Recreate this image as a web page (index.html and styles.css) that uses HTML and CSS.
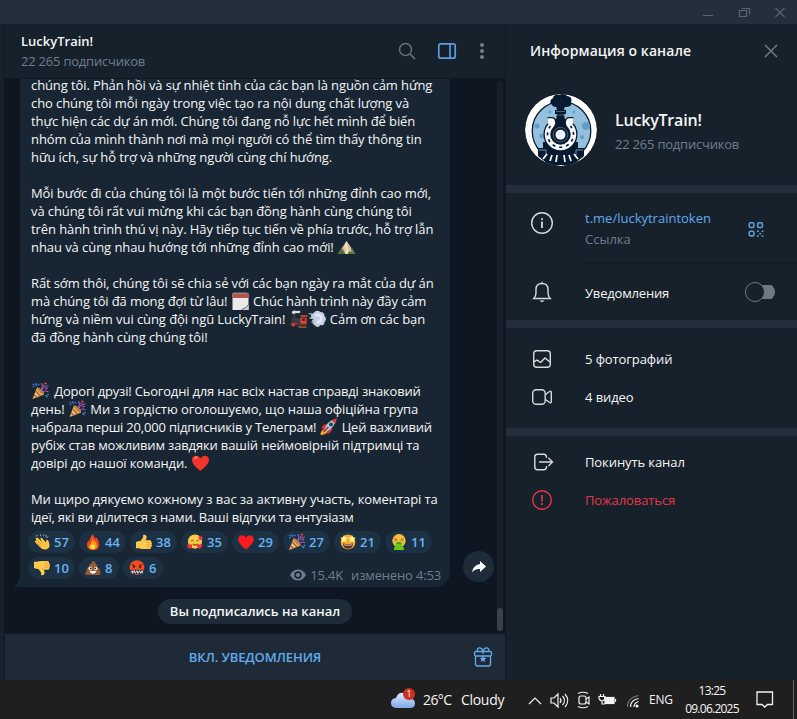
FILE: index.html
```html
<!DOCTYPE html>
<html lang="ru">
<head>
<meta charset="utf-8">
<title>LuckyTrain!</title>
<link rel="stylesheet" href="styles.css">
</head>
<body>
<svg class="sprite" aria-hidden="true">
  <symbol id="party" viewBox="0 0 18 18">
    <path d="M1 17 5.5 5.5 Q10 7 12.5 12.5Z" fill="#fbc02d"/>
    <path d="M4.2 9 9 14M2.6 13 5.6 15.6" stroke="#8e4fb5" stroke-width="1.3"/>
    <ellipse cx="9" cy="9" rx="1.6" ry="4.8" transform="rotate(-45 9 9)" fill="#c8842b"/>
    <path d="M9 8Q12 5 10 1M10 9Q12 4 17 4M11 10Q14 8 17 10" stroke="#8560c4" fill="none" stroke-width="1.2"/>
    <path d="M1 2l2 1M4 1l1 3M6 2l2 1M1 5l2-1" stroke="#3d6fd6" stroke-width="1.3"/>
    <path d="M13 1l2 1M14 7l2-1M12 3l1 1" stroke="#e0465e" stroke-width="1.5"/>
    <path d="M14 13l2 2M16 12l1 1" stroke="#4a86e0" stroke-width="1.3"/>
  </symbol>
  <symbol id="calendar" viewBox="0 0 18 18">
    <path d="M1 1.500h16V18H1z" fill="#e9e9ea"/><path d="M1 1.500h16V6H1z" fill="#b9524e"/>
    <path d="M2 1h14" stroke="#a8a8ad" stroke-width="1.6" stroke-dasharray="1 1"/>
    <path d="M10 18q5-1 7-6v6z" fill="#d0d1d4"/><path d="M10 17.500q5-1 7-5" stroke="#606469" fill="none"/>
  </symbol>
  <symbol id="mountain" viewBox="0 0 18 18">
    <path d="M0 16 9 3 18 16z" fill="#8d8271"/><path d="M9 3 13 9 14 15 8 16 5 10z" fill="#d8c7a0"/>
    <path d="M9 3 7 9l2 3-2 4h5l-2-6z" fill="#efe0bd"/><path d="M4 11 0 16h8l-2-3zM12 13l6 3h-8z" fill="#54753b"/>
    <path d="M3 13l3 3M14 9l3 6" stroke="#4b504a"/>
  </symbol>
  <symbol id="train" viewBox="0 0 18 18">
    <path d="M4 4Q1 3 3 1q2-1 4 0 4-1 4 1-1 2-4 1z" fill="#d8dadb"/>
    <path d="M3 4h3v4h5V5h6v9H2V8h2z" fill="#393b41"/><path d="M11 5h7v2h-7z" fill="#c83a2c"/><path d="M11 8h6v6h-6z" fill="#e64936"/>
    <path d="M12.500 8.500h3v2.500h-3z" fill="#48231f"/><path d="M1 13h16v2H1z" fill="#a62f2a"/><circle cx="4" cy="15" r="1.700" fill="#d33e32"/><circle cx="9" cy="15" r="2" fill="#33363c"/><path d="M9 17h8" stroke="#e37a2d"/>
  </symbol>
  <symbol id="puff" viewBox="0 0 18 18">
    <path d="M5 3Q8-1 12 2q4 0 4 4 3 3 0 6 0 4-4 3-3 4-6 0-3-1-1-3Q2 11 5 9 1 9 3 7 1 4 5 3z" fill="#c3cfe3"/>
    <path d="M7 5q5-1 6 3-1 5-5 4" fill="none" stroke="#e3eaf5" stroke-width="2.500"/><path d="M0 4q3-1 4 1M1 8h4M3 12h3" stroke="#a8b7cf" stroke-width="1.300" fill="none"/>
  </symbol>
  <symbol id="rocket" viewBox="0 0 18 18">
    <path d="M1 17q0-5 4-6l3 3q-2 3-7 3z" fill="#f7a624"/><path d="M2 10q1-4 6-4l-3 6zM8 16q4-1 5-6l-6 3z" fill="#d23633"/>
    <path d="M5 12Q7 3 16 1q0 8-9 13z" fill="#a9cadb"/><path d="M12 2.500 17.500 0 16 6z" fill="#d73e38"/><circle cx="11.500" cy="6.500" r="2" fill="#2c4258"/><path d="M4 14l5-5" stroke="#a3282a" stroke-width="1.500"/>
  </symbol>
  <symbol id="heart" viewBox="0 0 18 18">
    <path d="M9 17Q0 10 .5 6C.5 1 6.500.200 9 4.500 11.500.200 17.500 1 17.500 6 18 10 9 17 9 17z" fill="#f3352b"/><path d="M3 5q1-2 3-2" stroke="#ff8170" stroke-width="1.300" fill="none"/>
  </symbol>
  <symbol id="heart-flat" viewBox="0 0 18 18">
    <path d="M9 17.500Q0 10.500.3 6C.5.500 7-.3 9 4.500 11-.3 17.500.500 17.700 6 18 10.500 9 17.500 9 17.500z" fill="#fa1c22"/>
  </symbol>
  <symbol id="clap" viewBox="0 0 18 18">
    <path d="M2 5q1.500-2 3 0l4 4-2-4q1-1.500 2.500 0l4 4.500.5-3q2-.5 2.500 2l1 4q0 4-4 5-4 .5-7-3L1 9q-.5-1.500 1.500-1.500z" fill="#ffc642"/>
    <path d="M3.500 7l5 5M3 10l5 4.500" stroke="#d88a24" stroke-width=".8"/><path d="M2 2.500l2-1M7 .5l1 2M11 .5v2M14 1l-1 2M16 3l-2 1" stroke="#a8b5c2" stroke-width="1.100"/>
  </symbol>
  <symbol id="fire" viewBox="0 0 18 18">
    <path d="M9 0q0 3 3 5l1-1q3 4 3 8 0 6-7 6-6 0-7-5 0-3 2-6l1 2q0-5 4-9z" fill="#f3451b"/><path d="M9 5q0 3 3 4l1 2q2 6-4 6.500-6 0-4-6l1 1q1-3 3-7.500z" fill="#ff9e18"/><path d="M9 10q0 2 2 3 1 4-2 4t-2.500-4q2-1 2.500-3z" fill="#ffe34f"/>
  </symbol>
  <symbol id="thumb" viewBox="0 0 18 18">
    <path d="M0 9q2-1 5-1l3-4V1q3-1 4 2 0 2-1 4h4.500q2 0 1.500 2 1.500 1 .5 3 1 1-.5 2.500 0 2.500-2 2.500H8q-3 0-4-1H0z" fill="#ffc94c"/><path d="M11 7l-2 1M12 9.500h4M12 12h4.500M12 14.500h4" stroke="#e09b32" stroke-width=".8"/>
  </symbol>
  <symbol id="love" viewBox="0 0 18 18">
    <circle cx="9" cy="8.500" r="8" fill="#ffc847"/><path d="M4.500 8q1.500-2 3 0M10.500 8q1.500-2 3 0" stroke="#633a20" fill="none"/><path d="M6.500 11q2.500 3 5 0" stroke="#783b22" fill="none" stroke-width="1.200"/>
    <path d="M3 17q-4-3-2.500-5Q2 10.500 3.500 12q2-1 2.500 1 0 2-3 4zM14 17q-4-3-3-5 2-1.500 3 0 2-1.500 3 0 1 2-3 5zM15 7q-3-2-2-4 1-1 2 0 1.500-1 2.500.5T15 7z" fill="#f42e3d"/>
  </symbol>
  <symbol id="starface" viewBox="0 0 18 18">
    <circle cx="9" cy="9" r="8.300" fill="#f0aa38"/><path d="M3.500 10.500q5.500 2 11 0 0 6-5.500 6t-5.500-6z" fill="#5f2c1b"/><path d="M4.500 11.500q4.500 1.300 9 0l-.8 1.500H5.300z" fill="#fff"/>
    <path id="star" d="m4.500 1.200 1.300 2.700 3 .4-2.200 2 .6 3-2.700-1.500-2.700 1.500.6-3-2.200-2 3-.4z" fill="#fff58a"/><path d="m13.500 1.200 1.300 2.700 3 .4-2.200 2 .6 3-2.700-1.500-2.700 1.500.6-3-2.200-2 3-.4z" fill="#fff58a"/>
  </symbol>
  <symbol id="sick" viewBox="0 0 18 18">
    <circle cx="9" cy="7.500" r="7.500" fill="#f8bd3e"/><path d="M3.500 5 7 6.500 4 8M14.500 5 11 6.500 14 8" fill="none" stroke="#8a5a25" stroke-width=".9"/>
    <path d="M5.500 10q3.500-3 7 0v4q3 1 2 4h-11q-1-2 1-4z" fill="#69c51c"/><path d="M6.500 10q2.500-1.500 5 0v1h-5z" fill="#3d8a19"/>
  </symbol>
  <symbol id="poop" viewBox="0 0 18 18">
    <path d="M8 1q4 0 4 3.500 2.500 1 2 4 3 .5 2.500 4 1.500 1 1 3-1 2-3 1.500h-11Q0 17 .3 15q0-2 1.700-3 0-3 2-4 0-3 3-4 1-1 1-3z" fill="#965b35"/><circle cx="6" cy="9.500" r="2" fill="#fff"/><circle cx="12" cy="9.500" r="2" fill="#fff"/><circle cx="6.500" cy="9.500" r="1" fill="#251d19"/><circle cx="11.500" cy="9.500" r="1" fill="#251d19"/><path d="M5 12.500h8q-1 3-4 3t-4-3z" fill="#fff"/>
  </symbol>
  <symbol id="angry" viewBox="0 0 18 18">
    <circle cx="9" cy="8.500" r="8.300" fill="#ef4e25"/><path d="M3 5l4 2M15 5l-4 2" stroke="#6b1e19" stroke-width="1.200"/><circle cx="5.500" cy="8" r="1.200" fill="#4c1a18"/><circle cx="12.500" cy="8" r="1.200" fill="#4c1a18"/>
    <path d="M1 11h16v5H1z" fill="#32343a"/><path d="M2 14l2-2v3l2-3 1 3 2-3 1 3 2-3 1 3 2-3v3" fill="none" stroke="#eee"/>
  </symbol>
</svg>

<div class="window">
  <header class="titlebar">
    <svg viewBox="0 0 97 24" fill="none" stroke="#566475" stroke-width="1.200"><path d="M3 15.500h10M39.500 10.500h7v6h-7zM41.500 8.500h8v6M75.500 8l9 9M84.500 8l-9 9"/></svg>
  </header>
  <div class="client">
    <main class="chat">
      <header class="chat-head">
        <div class="chat-name"><b>LuckyTrain!</b><span>22 265 подписчиков</span></div>
        <svg class="head-icons" viewBox="0 0 110 54" fill="none">
          <circle cx="10.500" cy="25.500" r="6" stroke="#66717c" stroke-width="1.500"/><path d="M15 30l5 5" stroke="#66717c" stroke-width="1.700"/>
          <rect x="43.800" y="19.800" width="16.400" height="14.400" rx="2" stroke="#5a9ddd" stroke-width="1.700"/><path d="M55 20v14" stroke="#5a9ddd" stroke-width="1.700"/>
          <g fill="#737d87"><circle cx="87" cy="21" r="2.100"/><circle cx="87" cy="27" r="2.100"/><circle cx="87" cy="33" r="2.100"/></g>
        </svg>
      </header>
      <section class="feed">
        <div class="message-row">
          <article class="bubble">
            <div class="text">
              <p>chúng tôi. Phản hồi và sự nhiệt tình của các bạn là nguồn cảm hứng</p>
              <p>cho chúng tôi mỗi ngày trong việc tạo ra nội dung chất lượng và</p>
              <p>thực hiện các dự án mới. Chúng tôi đang nỗ lực hết mình để biến</p>
              <p>nhóm của mình thành nơi mà mọi người có thể tìm thấy thông tin</p>
              <p>hữu ích, sự hỗ trợ và những người cùng chí hướng.</p>
              <p></p>
              <p>Mỗi bước đi của chúng tôi là một bước tiến tới những đỉnh cao mới,</p>
              <p>và chúng tôi rất vui mừng khi các bạn đồng hành cùng chúng tôi</p>
              <p>trên hành trình thú vị này. Hãy tiếp tục tiến về phía trước, hỗ trợ lẫn</p>
              <p>nhau và cùng nhau hướng tới những đỉnh cao mới! <svg><use href="#mountain"/></svg></p>
              <p></p>
              <p>Rất sớm thôi, chúng tôi sẽ chia sẻ với các bạn ngày ra mắt của dự án</p>
              <p>mà chúng tôi đã mong đợi từ lâu! <svg><use href="#calendar"/></svg> Chúc hành trình này đầy cảm</p>
              <p>hứng và niềm vui cùng đội ngũ LuckyTrain! <svg><use href="#train"/></svg><svg><use href="#puff"/></svg> Cảm ơn các bạn</p>
              <p>đã đồng hành cùng chúng tôi!</p>
              <p></p>
              <p></p>
              <p><svg><use href="#party"/></svg> Дорогі друзі! Сьогодні для нас всіх настав справді знаковий</p>
              <p>день! <svg><use href="#party"/></svg> Ми з гордістю оголошуємо, що наша офіційна група</p>
              <p>набрала перші 20,000 підписників у Телеграм! <svg><use href="#rocket"/></svg> Цей важливий</p>
              <p>рубіж став можливим завдяки вашій неймовірній підтримці та</p>
              <p>довірі до нашої команди. <svg><use href="#heart"/></svg></p>
              <p></p>
              <p>Ми щиро дякуємо кожному з вас за активну участь, коментарі та</p>
              <p>ідеї, які ви ділитеся з нами. Ваші відгуки та ентузіазм</p>
            </div>
            <div class="reactions">
              <span><svg><use href="#clap"/></svg>57</span><span><svg><use href="#fire"/></svg>44</span><span><svg><use href="#thumb"/></svg>38</span><span><svg><use href="#love"/></svg>35</span><span><svg><use href="#heart-flat"/></svg>29</span><span><svg class="wide"><use href="#party"/></svg>27</span><span><svg><use href="#starface"/></svg>21</span><span><svg><use href="#sick"/></svg>11</span>
            </div>
            <div class="last-row">
              <div class="reactions">
                <span><svg class="down"><use href="#thumb"/></svg>10</span><span class="one"><svg><use href="#poop"/></svg>8</span><span class="one"><svg><use href="#angry"/></svg>6</span>
              </div>
              <div class="meta">
                <svg viewBox="0 0 16 12"><path d="M0 6Q3 .5 8 .5T16 6q-3 5.500-8 5.500T0 6z" fill="#6d7f8f"/><circle cx="8" cy="6" r="3.700" fill="#182533"/><circle cx="8" cy="6" r="2" fill="#6d7f8f"/></svg>
                <span>15.4K</span><span>изменено 4:53</span>
              </div>
            </div>
            <svg class="tail" viewBox="0 0 6 12"><path d="M6 0v12H.5Q-.5 12 .5 11 5 8 6 0z" fill="#182533"/></svg>
          </article>
          <button class="share" aria-label="Поделиться"><svg viewBox="0 0 16 14"><path d="M9 1l6 5.500L9 12V9Q4 8.500 1 12.500 2 5 9 4z" fill="#fff"/></svg></button>
        </div>
        <div class="service">Вы подписались на канал</div>
        <div class="scroll"><i></i></div>
      </section>
      <footer class="mute"><span>ВКЛ. УВЕДОМЛЕНИЯ</span>
        <svg viewBox="0 0 20 20" fill="none" stroke="#63abec" stroke-width="1.300"><rect x="1.500" y="4.500" width="17" height="4.500" rx="1.500"/><path d="M2.500 9v8q0 2 2 2h11q2 0 2-2V9M10 4.500Q9 .5 6 .8 3 2 5 4.500M10 4.500Q11 .5 14 .8 17 2 15 4.500M10 4v3"/><path d="m10 8.500 1 2.200 2.400.3-1.800 1.600.5 2.400-2.100-1.200L7.900 15l.5-2.400L6.600 11l2.400-.3z" fill="#63abec" stroke="none"/></svg>
      </footer>
    </main>
    <aside class="info">
      <header class="info-head"><h2>Информация о канале</h2><svg viewBox="0 0 14 14" stroke="#77818a" stroke-width="1.400"><path d="M1 1l12 12M13 1 1 13"/></svg></header>
      <div class="profile">
        <svg class="avatar" viewBox="0 0 72 72">
          <clipPath id="round"><circle cx="36" cy="36" r="36"/></clipPath>
          <g clip-path="url(#round)"><circle cx="36" cy="36" r="36" fill="#fff"/>
            <circle cx="36.500" cy="37" r="29.300" fill="#92c0dd" stroke="#071a31" stroke-width="1.300"/>
            <g fill="#659dc4"><circle cx="61" cy="32" r="4"/><circle cx="12" cy="32" r="2.500"/><circle cx="17" cy="42" r="2.500"/><circle cx="49" cy="18" r="1.500"/><circle cx="25" cy="18" r="1.500"/><circle cx="57" cy="43" r="2"/></g>
            <g fill="#071a31">
              <path d="M27 11q-4-4 1-7 1-4 6-3 5-3 8 1 6 1 4 6 2 4-4 5H31q-3 0-4-2z"/>
              <path d="M31 12h9l-1 4h2v4h-2l1 6h-9l1-6h-2v-4h2z"/>
              <path d="M26 25h19l4 10v20H22V35z"/>
              <path d="M13 54h5v-6h35v6h6v8L48 71H24L13 62z"/>
            </g>
            <path d="M31 17.500h9M31 21h9" stroke="#58748d" stroke-width=".8"/>
            <path d="M22.500 27H27Q28 29 26.500 31a13 13 0 1 0 18 0Q43 29 44 27h4.500" fill="none" stroke="#071a31" stroke-width="8" stroke-linejoin="round"/>
            <path d="M22.500 27H27Q28 29 26.500 31a13 13 0 1 0 18 0Q43 29 44 27h4.500" fill="none" stroke="#f6f9fb" stroke-width="5.500" stroke-linejoin="round"/>
            <path d="M25.500 32a13 13 0 1 0 20 0" fill="none" stroke="#071a31" stroke-width="1.600" stroke-dasharray="3 4"/>
            <circle cx="35.500" cy="40.700" r="7.300" fill="none" stroke="#6b8298" stroke-width=".7"/><circle cx="35.500" cy="40.700" r="5" fill="#eff5f9"/>
            <path d="M14 56h7v5M58 56h-7v5" fill="none" stroke="#91adc2" stroke-width=".8"/>
            <path d="M22 60l-4 5M27 61l-2 6M32 61l-1 7M39 61l1 7M44 61l2 6M49 60l4 5" stroke="#fff" stroke-width="1.700"/>
          </g>
        </svg>
        <div><h1>LuckyTrain!</h1><p>22 265 подписчиков</p></div>
      </div>
      <section class="details">
        <div class="row link">
          <svg class="icon" viewBox="0 0 24 24"><circle cx="12" cy="12" r="10.300"/><path d="M12 10.500V17M12 7.200v1.800" stroke-width="1.800"/></svg>
          <div class="label"><a>t.me/luckytraintoken</a><small>Ссылка</small></div>
          <svg class="qr" viewBox="0 0 16 16" fill="none" stroke="#5e9fda" stroke-width="1.700"><rect x=".8" y=".8" width="5" height="5" rx="1.500"/><rect x="9.800" y=".8" width="5" height="5" rx="1.500"/><rect x=".8" y="9.800" width="5" height="5" rx="1.500"/><path d="M9 9.800h2M14 9.800h2M11.500 12.500h2M9 15h2M14 15h2"/></svg>
        </div>
        <div class="row notify">
          <svg class="icon" viewBox="0 0 24 24"><path d="M3.800 18.500h16.400q-2.200-2.500-2.200-5.500V9.500q0-6-6-6t-6 6V13q0 3-2.200 5.500zM12 1.800v1.700"/><path d="M9.500 20.500h5q-2.500 3-5 0z" fill="#d8dbde" stroke="none"/></svg>
          <div class="label">Уведомления</div><i class="toggle"></i>
        </div>
      </section>
      <section class="media">
        <div class="row"><svg class="icon" viewBox="0 0 24 24"><rect x="3.700" y="3.700" width="16.600" height="16.600" rx="3"/><path d="M4 15q3-3 4.500-1 1.500 2.500 3.500 0l3-3 5 4"/></svg><div class="label">5 фотографий</div></div>
        <div class="row"><svg class="icon" viewBox="0 0 24 24"><rect x="2.700" y="4.700" width="12.500" height="14.600" rx="3.500"/><path d="M15.500 9.500 19.500 6.500q1.800-1 1.800 1v9q0 2-1.800 1l-4-3"/></svg><div class="label">4 видео</div></div>
      </section>
      <section class="actions">
        <div class="row"><svg class="icon" viewBox="0 0 24 24"><path d="M16.500 8V7q0-2.700-2.700-2.700H7.500q-2.700 0-2.700 2.700v10q0 2.700 2.700 2.700h6.300q2.700 0 2.700-2.700v-1M9 12h13.500M18.500 8l4 4-4 4"/></svg><div class="label">Покинуть канал</div></div>
        <div class="row danger"><svg class="icon" viewBox="0 0 24 24"><circle cx="12" cy="12" r="9.300"/><path d="M12 7v6.500M12 15v2" stroke-width="1.700"/></svg><div class="label">Пожаловаться</div></div>
      </section>
    </aside>
  </div>
  <footer class="taskbar">
    <svg class="weather" viewBox="0 0 28 24"><defs><linearGradient id="sky" x2="0" y2="1"><stop stop-color="#dfeaff"/><stop offset="1" stop-color="#7fa8e8"/></linearGradient></defs><path d="M6 22q-5-.5-5-5t5-5q2-6 8-5 5 0 7 6 4 0 4 4.500T20 22z" fill="url(#sky)"/><circle cx="19" cy="8" r="6" fill="#cc3023"/><text x="16.500" y="11.300" fill="#fff" font-family="Open Sans" font-size="9">1</text></svg>
    <span class="temp">26°C</span><span class="cloudy">Cloudy</span>
    <svg class="tray" viewBox="0 0 116 39" fill="none" stroke="#f2f2f2" stroke-width="1.200">
      <path d="M1 24l6-6 6 6"/>
      <path d="M23 18h3l4-4v13l-4-4h-3zM32 18q2 2.500 0 5M34.500 16q4 4.500 0 9M37 14q5.500 6.500 0 13"/>
      <rect x="51" y="16" width="7" height="8" rx="2"/><path d="M58 19l3-2v7l-3-2M50 13.500q5-2.500 10 0M50 26.500q5 2.500 10 0"/>
      <rect x="77" y="17.500" width="9" height="6" fill="#f2f2f2"/><path d="M87.500 19v3M72.500 14v3M75.500 14v3M71 16.500h6v2q-1 2.500-3 2.500t-3-2.500zM74 21v3h3"/>
      <path d="M99.500 27q0-9.500 11-11.500" stroke="#777"/><path d="M102.500 27q0-7 8-8.500"/><path d="M106 27q0-4 4.500-5.500"/><circle cx="109" cy="26" r="1.500" fill="#fff" stroke="none"/>
    </svg>
    <span class="lang">ENG</span>
    <div class="clock"><span>13:25</span><span>09.06.2025</span></div>
    <svg class="action" viewBox="0 0 18 17" fill="none" stroke="#f2f2f2" stroke-width="1.300"><path d="M1 1h15.500v12.500h-5L8.700 16 6 13.500H1z"/></svg>
    <i class="desktop-edge"></i>
  </footer>
</div>
</body>
</html>
```
FILE: styles.css
```css
* { box-sizing: border-box; }
body { margin: 0; background: #17212b; color: #f5f5f5; font: 13px/18px "Open Sans", "Noto Sans", sans-serif; overflow: hidden; }
p, h1, h2 { margin: 0; }
svg { display: block; flex: none; }
.sprite { position: absolute; width: 0; height: 0; }
.window { width: 797px; height: 719px; display: flex; flex-direction: column; }
.titlebar { height: 24px; flex: none; background: #242f3d; display: flex; justify-content: flex-end; }
.titlebar svg { width: 97px; height: 24px; }
.client { height: 656px; display: flex; padding-left: 4px; }
.chat { width: 502px; border: solid #101922; border-width: 0 1px; display: flex; flex-direction: column; }
.chat-head { height: 55px; flex: none; display: flex; justify-content: space-between; border-bottom: 1px solid #101922; padding-left: 16px; }
.chat-name { display: flex; flex-direction: column; padding-top: 7px; line-height: 20px; }
.chat-name b { font-weight: 600; }
.chat-name span { color: #6d7f8f; letter-spacing: -.22px; }
.head-icons { width: 110px; height: 54px; }
.feed { flex: 1; min-height: 0; overflow: hidden; background: #0e1621; position: relative; }
.message-row { display: flex; align-items: flex-end; gap: 13px; padding-left: 15px; margin-top: -3px; }
.bubble { width: 430px; height: 511px; background: #182533; border-radius: 0 0 15px 0; position: relative; padding: 0 8px; flex: none; }
.text { padding-left: 3px; white-space: nowrap; letter-spacing: -.09px; }
.text p { height: 18px; }
.text p:nth-child(1) { letter-spacing: -.1px; }
.text p:nth-child(3) { letter-spacing: -.115px; }
.text p:nth-child(10) { letter-spacing: -.065px; }
.text p:nth-child(12), .text p:nth-child(13) { letter-spacing: -.12px; }
.text p:nth-child(14) { letter-spacing: -.075px; }
.text p:nth-child(15) { letter-spacing: -.11px; }
.text p:nth-child(18) { letter-spacing: -.185px; }
.text p:nth-child(19) { letter-spacing: -.075px; }
.text p:nth-child(20) { letter-spacing: -.185px; }
.text p:nth-child(21) { letter-spacing: -.15px; }
.text p:nth-child(22) { letter-spacing: -.13px; }
.text p:nth-child(24) { letter-spacing: -.07px; }
.text p:nth-child(25) { letter-spacing: -.21px; }
.text svg { display: inline-block; width: 19px; height: 18px; vertical-align: -4px; }
.text p:nth-child(18) svg { margin-right: 1px; }
.reactions { display: flex; gap: 4px; margin-top: 5px; }
.reactions span { width: 47px; height: 22px; border-radius: 11px; background: #1c3144; color: #6ab2f2; font-weight: 600; line-height: 22px; display: flex; align-items: center; gap: 4px; padding-left: 6px; }
.reactions .one { width: 40px; }
.reactions svg { width: 16px; height: 16px; }
.reactions .wide { width: 18px; height: 18px; margin: 0 -1px; }
.reactions .down { transform: scaleY(-1); }
.last-row { display: flex; justify-content: space-between; }
.last-row .reactions { margin-top: 4px; }
.meta { display: flex; align-items: center; color: #6d7f8f; margin-top: 13px; height: 18px; padding-right: 1px; letter-spacing: -.16px; }
.meta svg { width: 16px; height: 12px; margin-right: 4px; }
.meta span + span { margin-left: 8px; }
.tail { position: absolute; left: -6px; bottom: 0; width: 6px; height: 12px; }
.share { border: 0; padding: 0; width: 31px; height: 31px; border-radius: 50%; background: #1e2c3a; display: grid; place-items: center; margin-bottom: 5px; }
.share svg { width: 16px; height: 14px; }
.service { width: 194px; height: 25px; margin: 12px 0 0 153px; border-radius: 13px; background: #1e2c3a; font-weight: 600; line-height: 25px; text-align: center; }
.scroll { position: absolute; right: 2px; top: 2px; bottom: 2px; width: 6px; border-radius: 3px; background: #191f2a; display: flex; align-items: flex-end; }
.scroll i { width: 6px; height: 23px; border-radius: 3px; background: #3b414c; }
.mute { height: 47px; flex: none; border-top: 1px solid #101922; background: #1e2a38; color: #61aaec; display: flex; align-items: center; padding-right: 12px; font-weight: 600; letter-spacing: -.12px; }
.mute span { flex: 1; text-align: center; padding-left: 32px; }
.mute svg { width: 20px; height: 20px; }
.info { flex: 1; }
.info-head { height: 54px; display: flex; align-items: center; justify-content: space-between; padding: 0 19px 0 24px; }
.info-head h2 { font: 600 14px/20px "Open Sans", sans-serif; letter-spacing: .08px; }
.info-head svg { width: 14px; height: 14px; }
.profile { height: 107px; padding: 16px 0 0 19px; display: flex; gap: 18px; }
.avatar { width: 72px; height: 72px; }
.profile h1 { font: 600 16px/22px "Open Sans", sans-serif; margin-top: 15px; letter-spacing: -.2px; }
.profile p { color: #6d7f8f; line-height: 20px; margin-top: 3px; letter-spacing: -.22px; }
.info section { border-top: 8px solid #232e3c; }
.row { display: flex; align-items: center; height: 38px; padding-left: 24px; }
.icon { width: 24px; height: 24px; fill: none; stroke: #d8dbde; stroke-width: 1.4; margin-right: 31px; }
.label { flex: 1; letter-spacing: -.09px; }
.details { height: 135px; }
.row.link { height: 71px; align-items: flex-start; padding-top: 18px; }
.link .label { display: flex; flex-direction: column; height: 53px; border-bottom: 1px solid #101922; margin-left: -2px; padding-left: 2px; letter-spacing: 0; }
.link a { color: #62aaeb; line-height: 18px; margin-top: -2px; }
.link small { color: #6d7f8f; font-size: 13px; line-height: 22px; margin-top: 1px; }
.link .qr { width: 49px; height: 53px; padding: 11px 33px 26px 0; border-bottom: 1px solid #101922; }
.row.notify { height: 56px; padding-right: 22px; }
.notify .label { letter-spacing: -.18px; padding-top: 2px; }
.toggle { width: 30px; height: 18px; display: flex; align-items: center; background: linear-gradient(#6d7883, #6d7883) 8px 2px / 22px 14px no-repeat; border-radius: 9px; }
.toggle::before { content: ""; width: 18px; height: 18px; border: 1.7px solid #6d7883; border-radius: 50%; background: #17212b; }
.media { height: 108px; padding-top: 12px; }
.actions { padding-top: 7px; }
.danger { color: #e53743; }
.danger .icon { stroke: #e53743; }
.taskbar { height: 39px; flex: none; background: #1f1f1f; display: flex; align-items: center; padding-left: 390px; font-size: 14px; white-space: nowrap; }
.weather { width: 28px; height: 24px; margin: -3px 5px 0 0; }
.temp { width: 38px; letter-spacing: -.6px; }
.cloudy { width: 67px; letter-spacing: -.3px; }
.tray { width: 116px; height: 39px; }
.lang { width: 36px; margin-left: 5px; font-size: 12px; letter-spacing: -.2px; }
.clock { width: 54px; margin-right: 17px; display: flex; flex-direction: column; align-items: center; font-size: 12px; line-height: 18px; letter-spacing: -.75px; }
.action { width: 18px; height: 17px; }
.desktop-edge { width: 1px; height: 39px; margin-left: 19px; background: #666; }
```
